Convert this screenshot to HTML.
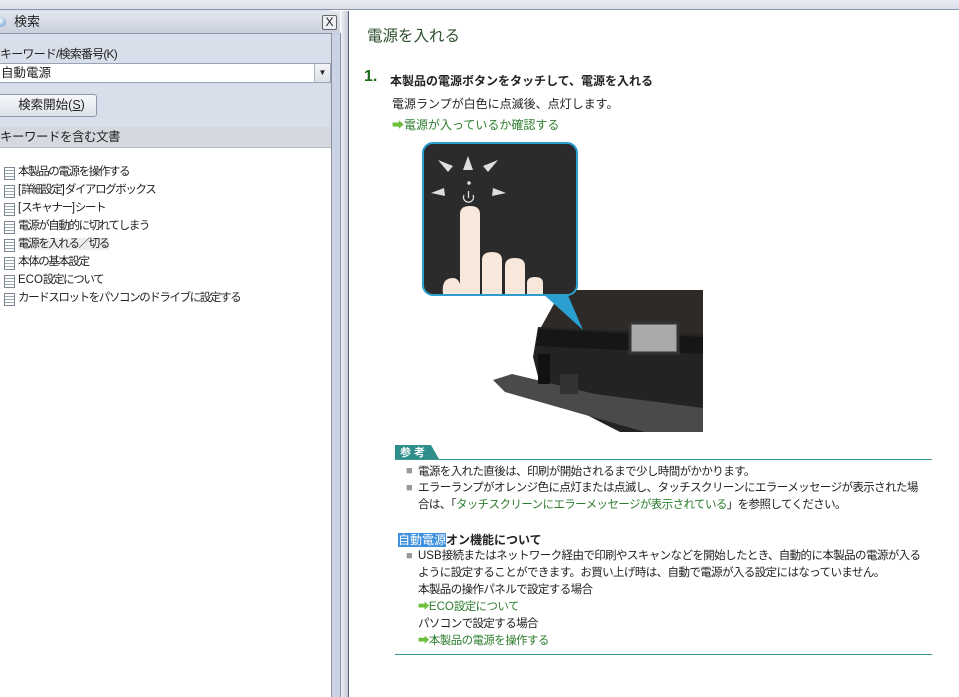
<!DOCTYPE html>
<html><head><meta charset="utf-8"><style>
*{margin:0;padding:0;box-sizing:border-box}
body{width:959px;height:697px;overflow:hidden;position:relative;background:#fff;font-family:"Liberation Sans","Noto Sans CJK JP",sans-serif;font-size:12px;color:#222}
.a{position:absolute}
.tb{left:0;top:0;width:959px;height:10px;background:linear-gradient(#e8ecf3,#d9dfea);border-bottom:1px solid #8d96a8}
.left{left:0;top:10px;width:331px;height:687px;background:#d9deeb}
.hdr{left:0;top:11px;width:340px;height:23px;background:linear-gradient(#e3e7ef,#c9cfdc);border-bottom:1px solid #8d96a8;font-size:13px;line-height:22px;padding-left:14px}
.x{left:322px;top:15px;width:15px;height:15px;border:1px solid #666;border-radius:2px;background:#eef0f5;font-size:12px;line-height:13px;text-align:center}
.lbl{left:0;top:45px;font-size:12px;letter-spacing:-0.8px}
.combo{left:-2px;top:63px;width:333px;height:20px;background:#fff;border:1px solid #9aa3b5;font-size:12.5px;line-height:18px;padding-left:2px}
.dd{right:0;top:0;width:16px;height:18px;background:linear-gradient(#f4f5f8,#dcdfe6);border-left:1px solid #b0b6c4;font-size:8px;text-align:center;line-height:18px}
.btn{left:-4px;top:94px;width:101px;height:23px;border:1px solid #8d96a8;border-radius:3px;background:linear-gradient(#f7f8fb,#dde1e9);font-size:12.5px;line-height:21px;text-align:center;padding-left:10px}
.list{left:0;top:127px;width:331px;height:570px;background:#fff;border-top:1px solid #a0a7b6}
.lh{left:0;top:127px;width:331px;height:21px;background:#d5d8de;border-bottom:1px solid #b5b9c2;font-size:12.5px;line-height:20px;letter-spacing:-0.5px}
.it{left:4px;font-size:11.5px;letter-spacing:-1.4px;height:17px;line-height:17px;padding-left:14px;white-space:nowrap}
.it span.l{letter-spacing:0}
.it:before{content:"";position:absolute;left:0;top:3px;width:9px;height:11px;border:1px solid #7d8595;background:repeating-linear-gradient(#fff 0 2px,#9aa 2px 3px)}
.div1{left:331px;top:33px;width:1px;height:664px;background:#8a92a2}
.div2{left:332px;top:33px;width:8px;height:664px;background:#ccd3e6}
.div3{left:340px;top:33px;width:1px;height:664px;background:#8a92a2}
.div4{left:341px;top:11px;width:7px;height:686px;background:linear-gradient(90deg,#eef0f4,#c8ccd6)}
.div5{left:348px;top:11px;width:1px;height:686px;background:#55607a}
.g{color:#2e7d2e}
.h1{left:367px;top:24px;font-size:15.5px;color:#2f4f2f}
.num{left:364px;top:68px;font-size:16px;font-weight:bold;color:#1f6b1f}
.t1{left:390px;top:72px;font-size:12px;font-weight:bold}
.p{font-size:12px}
.n{font-size:11.5px;letter-spacing:-0.6px;white-space:nowrap}
.n .l{letter-spacing:0}
.arr{color:#6cbf3a}
.b{position:absolute;left:406px;font-size:11px;color:#999}
</style></head><body>
<div class="a tb"></div>
<div class="a left"></div>
<div class="a hdr"><span style="position:absolute;left:-4px;top:6px;width:10px;height:10px;border-radius:50%;background:radial-gradient(circle at 40% 35%,#fff,#5a8fd0)"></span>検索</div>
<div class="a x">X</div>
<div class="a lbl">キーワード/検索番号(K)</div>
<div class="a combo">自動電源<div class="a dd">▼</div></div>
<div class="a btn">検索開始(<u>S</u>)</div>
<div class="a list"></div>
<div class="a lh">キーワードを含む文書</div>
<div class="a it" style="top:164px">本製品の電源を操作する</div>
<div class="a it" style="top:182px"><span class="l">[</span>詳細設定<span class="l">]</span>ダイアログボックス</div>
<div class="a it" style="top:200px"><span class="l">[</span>スキャナー<span class="l">]</span>シート</div>
<div class="a it" style="top:218px">電源が自動的に切れてしまう</div>
<div class="a it" style="top:236px"><span style="background:#eee">電源を入れる／切る</span></div>
<div class="a it" style="top:254px">本体の基本設定</div>
<div class="a it" style="top:272px"><span class="l">ECO</span>設定について</div>
<div class="a it" style="top:290px">カードスロットをパソコンのドライブに設定する</div>
<div class="a div1"></div><div class="a div2"></div><div class="a div3"></div><div class="a div4"></div><div class="a div5"></div>

<div class="a h1">電源を入れる</div>
<div class="a num">1.</div>
<div class="a t1">本製品の電源ボタンをタッチして、電源を入れる</div>
<div class="a p" style="left:392px;top:95px">電源ランプが白色に点滅後、点灯します。</div>
<div class="a p g" style="left:392px;top:116px"><span class="arr">➡</span>電源が入っているか確認する</div>

<svg class="a" style="left:420px;top:142px" width="285" height="292" viewBox="0 0 285 292">
<path d="M150 148 L283 148 L283 195 L120 187 L135 160 Z" fill="#2e2a28"/>
<path d="M118 185 L283 192 L283 290 L200 290 L122 250 L113 215 Z" fill="#232323"/>
<path d="M118 187 L283 195 L283 212 L116 204 Z" fill="#161616"/>
<rect x="210" y="181" width="48" height="30" fill="#a9a9a9" stroke="#333" stroke-width="3"/>
<path d="M73 238 L92 232 L175 252 L283 266 L283 290 L225 290 L85 250 Z" fill="#4a4a4a"/>
<rect x="118" y="212" width="12" height="30" fill="#111"/>
<rect x="140" y="232" width="18" height="20" fill="#333"/>
<polygon points="122,151 147,151 163,188" fill="#2a9fd0"/>
<rect x="3" y="1" width="154" height="152" rx="10" fill="#2b2b2b" stroke="#2a9fd0" stroke-width="2"/>
<polygon points="48,14 53,28 43,28" fill="#ddd"/>
<polygon points="18,18 33,24 28,30" fill="#ddd"/>
<polygon points="78,18 63,24 68,30" fill="#ddd"/>
<polygon points="11,51 24,46 25,54" fill="#ddd"/>
<polygon points="86,51 73,46 72,54" fill="#ddd"/>
<circle cx="49" cy="41" r="1.8" fill="#ddd"/>
<path d="M44 53 a5 5 0 1 0 9 0 M48.5 49 v7" stroke="#ddd" stroke-width="1.3" fill="none"/>
<path d="M40 152 V72 q0-8 10-8 q10 0 10 8 V152 Z" fill="#f8e8dc"/>
<path d="M62 152 V118 q0-8 10-8 q10 0 10 8 V152 Z" fill="#f8e8dc"/>
<path d="M85 152 V124 q0-8 10-8 q10 0 10 8 V152 Z" fill="#f8e8dc"/>
<path d="M107 152 V141 q0-6 8-6 q8 0 8 6 V152 Z" fill="#f8e8dc"/>
<path d="M23 152 q-2-16 10-16 q5 0 7 6 V152 Z" fill="#f8e8dc"/>
</svg>

<svg class="a" style="left:395px;top:443px" width="540" height="18"><polygon points="0,2 36,2 44,16 0,16" fill="#2e8f8a"/><line x1="0" y1="16.5" x2="537" y2="16.5" stroke="#3a9690"/><text x="5" y="13" fill="#fff" font-size="11" font-family="Liberation Sans,Noto Sans CJK JP,sans-serif" font-weight="bold">参 考</text></svg>
<div class="b" style="top:465px">■</div>
<div class="a n" style="left:418px;top:463px">電源を入れた直後は、印刷が開始されるまで少し時間がかかります。</div>
<div class="b" style="top:482px">■</div>
<div class="a n" style="left:418px;top:480px;line-height:17px">エラーランプがオレンジ色に点灯または点滅し、タッチスクリーンにエラーメッセージが表示された場<br>合は、「<span class="g">タッチスクリーンにエラーメッセージが表示されている</span>」を参照してください。</div>
<div class="a p" style="left:398px;top:531px;font-weight:bold"><span style="background:#3c8fdc;color:#fff;font-weight:normal">自動電源</span>オン機能について</div>
<div class="b" style="top:550px">■</div>
<div class="a n" style="left:418px;top:548px;line-height:17px"><span class="l">USB</span>接続またはネットワーク経由で印刷やスキャンなどを開始したとき、自動的に本製品の電源が入る<br>ように設定することができます。お買い上げ時は、自動で電源が入る設定にはなっていません。<br>本製品の操作パネルで設定する場合<br><span class="g"><span class="arr">➡</span><span class="l">ECO</span>設定について</span><br>パソコンで設定する場合<br><span class="g"><span class="arr">➡</span>本製品の電源を操作する</span></div>
<div class="a" style="left:395px;top:654px;width:537px;height:1px;background:#3a9690"></div>
</body></html>
